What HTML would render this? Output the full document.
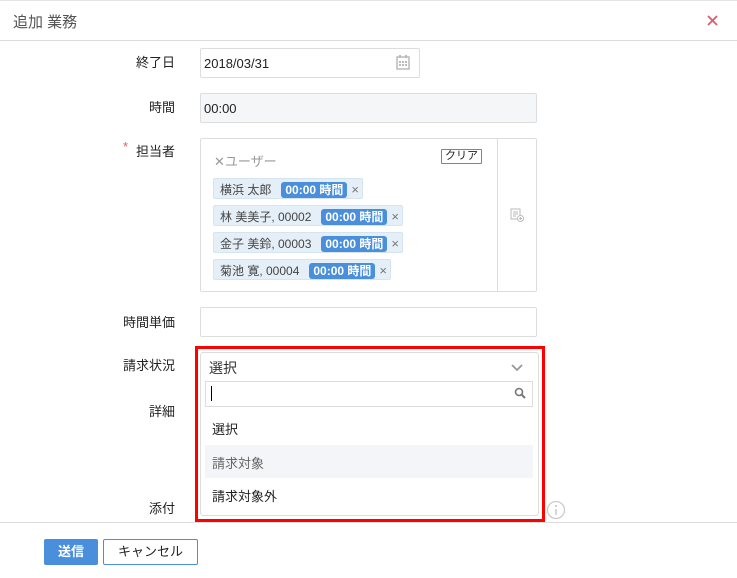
<!DOCTYPE html>
<html><head><meta charset="utf-8"><style>
*{box-sizing:border-box;margin:0;padding:0}
body{width:737px;height:578px;background:#fff;font-family:"Liberation Sans","Noto Sans CJK JP",sans-serif;font-size:13px;color:#222;position:relative;overflow:hidden}
.a{position:absolute}
.lbl{position:absolute;right:562px;font-size:13px;color:#222}
.inp{position:absolute;border:1px solid #ddd;border-radius:2px;background:#fff}
.tag{position:absolute;left:213px;height:21px;background:#e5eff7;border:1px solid #d6e4ef;border-radius:2px;font-size:12px;color:#444;padding:2px 0 0 6px;white-space:nowrap}
.badge{display:inline-block;background:#4a8fdb;color:#fff;font-weight:bold;font-size:12px;line-height:14px;border-radius:3px;padding:1px 4px;margin-left:10px}
.tx{color:#777;margin-left:4px;font-size:13px}
</style></head><body>
<div class="a" style="left:0;top:0;width:737px;height:1px;background:#e5e5e5"></div>
<div class="a" style="left:13px;top:11px;font-size:15px;color:#555">追加 業務</div>
<svg class="a" style="left:707px;top:15px" width="11" height="11" viewBox="0 0 11 11"><path d="M1 1l9 9M10 1l-9 9" stroke="#e05a6a" stroke-width="1.8"/></svg>
<div class="a" style="left:0;top:40px;width:737px;height:1px;background:#ddd"></div>

<div class="lbl" style="top:52px">終了日</div>
<div class="inp" style="left:200px;top:48px;width:220px;height:30px;padding:7px 3px">2018/03/31</div>
<svg class="a" style="left:396px;top:55px" width="14" height="15" viewBox="0 0 14 15"><rect x="1" y="2" width="12" height="12" fill="none" stroke="#bbb" stroke-width="1.5"/><rect x="3" y="0" width="2" height="3" fill="#bbb"/><rect x="9" y="0" width="2" height="3" fill="#bbb"/><g fill="#bbb"><rect x="3" y="6" width="2" height="2"/><rect x="6" y="6" width="2" height="2"/><rect x="9" y="6" width="2" height="2"/><rect x="3" y="9" width="2" height="2"/><rect x="6" y="9" width="2" height="2"/><rect x="9" y="9" width="2" height="2"/></g></svg>

<div class="lbl" style="top:97px">時間</div>
<div class="inp" style="left:200px;top:93px;width:337px;height:30px;padding:7px 3px;background:#f5f6f8">00:00</div>

<div class="a" style="left:123px;top:139px;color:#e05a6a;font-size:13px">*</div>
<div class="lbl" style="top:141px">担当者</div>
<div class="inp" style="left:200px;top:138px;width:337px;height:154px"></div>
<div class="a" style="left:497px;top:139px;width:1px;height:152px;background:#ddd"></div>
<div class="a" style="left:214px;top:151px;color:#999;font-size:13px">✕ユーザー</div>
<div class="a" style="left:441px;top:149px;border:1px solid #4a8fdb;font-size:11px;padding:0 3px;line-height:13px;border-radius:1px">クリア</div>
<svg class="a" style="left:510px;top:208px" width="14" height="14" viewBox="0 0 14 14"><rect x="1" y="1" width="9" height="10" fill="none" stroke="#bbb"/><path d="M3 4h5M3 6h5M3 8h3" stroke="#bbb"/><circle cx="10.5" cy="10.5" r="3" fill="#fff" stroke="#bbb"/><path d="M9 10.5h3M10.5 9v3" stroke="#bbb"/></svg>
<div class="tag" style="top:178px;width:150px">横浜 太郎<span class="badge">00:00 時間</span><span class="tx">×</span></div>
<div class="tag" style="top:205px;width:190px">林 美美子, 00002<span class="badge">00:00 時間</span><span class="tx">×</span></div>
<div class="tag" style="top:232px;width:190px">金子 美鈴, 00003<span class="badge">00:00 時間</span><span class="tx">×</span></div>
<div class="tag" style="top:259px;width:178px">菊池 寛, 00004<span class="badge">00:00 時間</span><span class="tx">×</span></div>

<div class="lbl" style="top:312px">時間単価</div>
<div class="inp" style="left:200px;top:307px;width:337px;height:30px"></div>

<div class="lbl" style="top:355px">請求状況</div>
<div class="lbl" style="top:401px">詳細</div>
<div class="lbl" style="top:498px">添付</div>

<div class="a" style="left:195px;top:346px;width:350px;height:176px;border:3px solid #f00"></div>
<div class="a" style="left:200px;top:352px;width:339px;height:164px;border:1px solid #ddd;border-radius:3px;background:#fff"></div>
<div class="a" style="left:209px;top:358px;font-size:14px;color:#333">選択</div>
<svg class="a" style="left:511px;top:364px" width="12" height="8" viewBox="0 0 12 8"><path d="M1 1l5 5 5-5" fill="none" stroke="#999" stroke-width="1.8"/></svg>
<div class="a" style="left:205px;top:381px;width:328px;height:26px;border:1px solid #ddd"></div>
<div class="a" style="left:211px;top:386px;width:1px;height:15px;background:#000"></div>
<svg class="a" style="left:514px;top:387px" width="12" height="12" viewBox="0 0 12 12"><circle cx="5" cy="5" r="3.5" fill="none" stroke="#777" stroke-width="1.6"/><path d="M7.5 7.5l3.5 3.5" stroke="#777" stroke-width="2"/></svg>
<div class="a" style="left:212px;top:419px;font-size:13px">選択</div>
<div class="a" style="left:205px;top:445px;width:328px;height:33px;background:#f4f5f8"></div>
<div class="a" style="left:212px;top:453px;font-size:13px;color:#666">請求対象</div>
<div class="a" style="left:212px;top:486px;font-size:13px">請求対象外</div>

<svg class="a" style="left:546px;top:500px" width="20" height="20" viewBox="0 0 20 20"><circle cx="10" cy="10" r="8.5" fill="none" stroke="#ccc" stroke-width="1.3"/><circle cx="10" cy="6" r="1.1" fill="#ccc"/><path d="M10 9v6" stroke="#ccc" stroke-width="1.6"/></svg>

<div class="a" style="left:0;top:522px;width:737px;height:1px;background:#ddd"></div>
<div class="a" style="left:44px;top:539px;width:54px;height:26px;background:#4a8fdb;border-radius:2px;color:#fff;font-weight:bold;text-align:center;line-height:26px;font-size:13px">送信</div>
<div class="a" style="left:103px;top:539px;width:95px;height:26px;border:1px solid #4a8fdb;border-radius:2px;text-align:center;line-height:24px;font-size:13px">キャンセル</div>
</body></html>
